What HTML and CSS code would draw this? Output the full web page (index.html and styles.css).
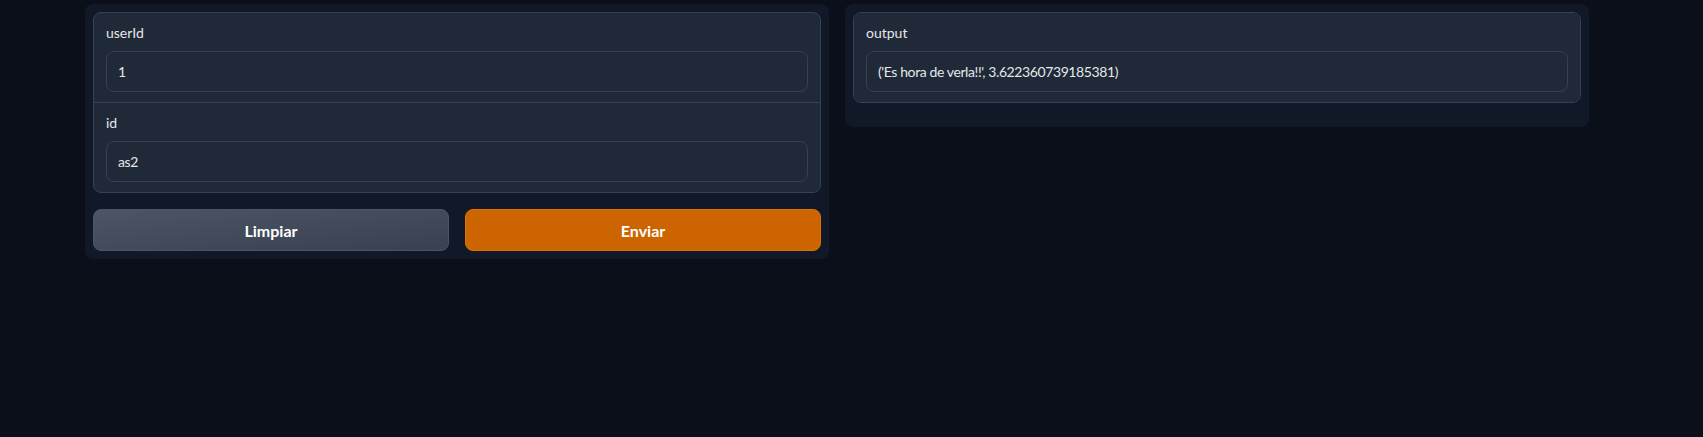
FILE: index.html
```html
<!DOCTYPE html>
<html>
<head>
<meta charset="utf-8">
<link rel="stylesheet" href="styles.css">
</head>
<body>
<div class="app">
  <div class="panel">
    <div class="form">
      <div class="block">
        <span class="label">userId</span>
        <div class="input">1</div>
      </div>
      <div class="block">
        <span class="label">id</span>
        <div class="input">as2</div>
      </div>
    </div>
    <div class="buttons">
      <button class="btn secondary">Limpiar</button>
      <button class="btn primary">Enviar</button>
    </div>
  </div>
  <div class="panel out">
    <div class="form">
      <div class="block">
        <span class="label">output</span>
        <div class="input">('Es hora de verla!!', 3.622360739185381)</div>
      </div>
    </div>
  </div>
</div>
</body>
</html>
```
FILE: styles.css
```css
html, body {
  margin: 0;
  padding: 0;
  background: #0b0f19;
  height: 100%;
}
body {
  font-family: "Lato", "Noto Sans", sans-serif;
  color: #e5e7eb;
}
.app {
  display: flex;
  align-items: flex-start;
  gap: 16px;
  padding: 4px 0 0 85px;
  width: 1504px;
}
.panel {
  flex: 1 1 0;
  background: #111827;
  border-radius: 8px;
  padding: 8px;
  display: flex;
  flex-direction: column;
  gap: 16px;
}
.panel.out {
  padding-bottom: 24px;
}
.form {
  display: flex;
  flex-direction: column;
  gap: 1px;
  background: #374151;
  border: 1px solid #374151;
  border-radius: 8px;
  overflow: hidden;
}
.block {
  background: #1f2937;
  padding: 10px 12px;
  display: flex;
  flex-direction: column;
  gap: 8px;
}
.label {
  font-size: 14px;
  line-height: 20px;
  color: #e5e7eb;
}
.input {
  background: #1f2937;
  border: 1px solid #374151;
  border-radius: 8px;
  height: 39px;
  box-sizing: content-box;
  padding: 0 11px;
  display: flex;
  align-items: center;
  font-size: 14px;
  letter-spacing: -0.4px;
  color: #e5e7eb;
}
.buttons {
  display: flex;
  gap: 16px;
}
.btn {
  flex: 1 1 0;
  height: 42px;
  border-radius: 8px;
  font-family: inherit;
  font-size: 16px;
  font-weight: 700;
  color: #ffffff;
  cursor: pointer;
}
.secondary {
  background: linear-gradient(to bottom right, #4b5563, #374151);
  border: 1px solid #4b5563;
}
.primary {
  background: #cc6400;
  border: 1px solid #dd7200;
}
```
